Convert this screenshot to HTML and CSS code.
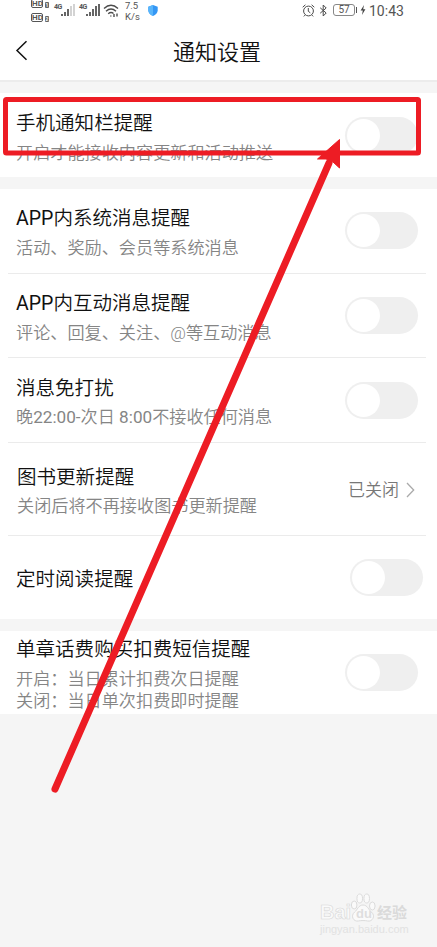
FILE: index.html
```html
<!DOCTYPE html>
<html lang="zh-CN">
<head>
<meta charset="utf-8">
<title>通知设置</title>
<link rel="stylesheet" href="styles.css">
</head>
<body>
<div class="screen">
  <header class="header">
    <div class="status">
      <div class="status-left">
        <div class="sims">
          <span class="sim"><b>HD</b><i>1</i></span>
          <span class="sim"><b>HD</b><i>2</i></span>
        </div>
        <div class="cell"><span>4G</span><svg width="14" height="14" viewBox="0 0 14 14"><path d="M1 11v2M4 9v4M7 6v7" /><path class="dim" d="M10 3v10M13 1v12"/></svg></div>
        <div class="cell"><span>4G</span><svg width="14" height="14" viewBox="0 0 14 14"><path d="M1 11v2M4 9v4M7 6v7M10 3v10M13 1v12"/></svg></div>
        <svg class="wifi" width="16" height="14" viewBox="0 0 16 14"><path d="M1 4.5Q8-2 15 4.5M3 7.3Q8 2.8 13 7.3M5.2 9.7Q8 7.4 10.5 9.5M7.8 11.5v1M11 10v3M14 9.5v3"/></svg>
        <div class="speed">7.5<br>K/s</div>
        <svg class="shield" width="10" height="11" viewBox="0 0 10 11"><path fill="#3497f4" d="M5 0l4.7 1.7v4Q9.300 9 5 11 .7 9 .3 5.700v-4z"/><path fill="#58b5fb" d="M5 0v11Q.7 9 .3 5.700v-4z"/></svg>
      </div>
      <div class="status-right">
        <svg width="13" height="13" viewBox="0 0 13 13"><circle cx="6.500" cy="7" r="4.900"/><path d="M6.300 4v3.300l2 1.500M.7 3.200L3.400.8M12.300 3.200L9.600.8M2.800 11.200l-1 1.200M10.200 11.200l1 1.200"/></svg>
        <svg class="bt" width="9" height="13" viewBox="0 0 9 13"><path d="M1.200 3.800l6 5.200-3 3V1l3 3-6 5.200"/></svg>
        <span class="battery">57</span><span class="nub"></span>
        <svg class="bolt" width="6" height="10" viewBox="0 0 6 10"><path d="M4 0L.6 5.400h2.200L2 10l3.400-5.700H3.200z"/></svg>
        <span class="clock">10:43</span>
      </div>
    </div>
    <div class="nav">
      <svg class="back" width="13" height="21" viewBox="0 0 13 21"><path d="M11.500 1.200L2 10.500l9.500 9.300"/></svg>
      <h1>通知设置</h1>
    </div>
  </header>

  <section class="group">
    <div class="row row-a">
      <div class="text"><h2>手机通知栏提醒</h2><p>开启才能接收内容更新和活动推送</p></div>
      <span class="toggle"></span>
    </div>
  </section>

  <section class="group">
    <div class="row row-b line">
      <div class="text"><h2><span class="latin">APP</span>内系统消息提醒</h2><p>活动、奖励、会员等系统消息</p></div>
      <span class="toggle"></span>
    </div>
    <div class="row row-c line">
      <div class="text"><h2><span class="latin">APP</span>内互动消息提醒</h2><p>评论、回复、关注、@等互动消息</p></div>
      <span class="toggle"></span>
    </div>
    <div class="row row-d line">
      <div class="text"><h2>消息免打扰</h2><p>晚<span class="latin">22:00-</span>次日<span class="latin"> 8:00</span>不接收任何消息</p></div>
      <span class="toggle"></span>
    </div>
    <div class="row row-e line">
      <div class="text"><h2>图书更新提醒</h2><p>关闭后将不再接收图书更新提醒</p></div>
      <div class="state">已关闭<svg width="9" height="16" viewBox="0 0 9 16"><path d="M1 1l6.700 7L1 15"/></svg></div>
    </div>
    <div class="row row-f">
      <div class="text"><h2>定时阅读提醒</h2></div>
      <span class="toggle"></span>
    </div>
  </section>

  <section class="group">
    <div class="row row-g">
      <div class="text"><h2>单章话费购买扣费短信提醒</h2><p>开启：当日累计扣费次日提醒<br>关闭：当日单次扣费即时提醒</p></div>
      <span class="toggle"></span>
    </div>
  </section>

  <svg class="marks" width="437" height="947" viewBox="0 0 437 947">
    <rect x="5.500" y="99.500" width="413" height="53.500" rx="1"/>
    <path class="shaft" d="M55 789L329 163"/>
    <path class="head" d="M339.500 139.500v28.500l-6.500-6-7-3-8.500 0z"/>
  </svg>

  <div class="watermark">
    <div class="brand">
      <span class="bai">Bai</span>
      <span class="paw"><svg width="26" height="30" viewBox="0 0 28 30" preserveAspectRatio="none"><ellipse cx="4.500" cy="12" rx="3" ry="4"/><ellipse cx="10.500" cy="5.500" rx="3" ry="4.500"/><ellipse cx="18" cy="5.500" rx="3" ry="4.500"/><ellipse cx="24" cy="13" rx="3" ry="4"/><path d="M14 12c5 0 6 5 9 7 5 4 1 10-4 9-3-.6-7-.6-10 0-5 1-9-5-4-9 3-2 4-7 9-7z"/></svg><em>du</em></span>
      <span class="jy">经验</span>
    </div>
    <div class="site">jingyan.baidu.com</div>
  </div>
</div>
</body>
</html>
```

FILE: styles.css
```css
* { box-sizing: border-box; }
body { margin: 0; background: #f5f5f5; }
h1, h2, p { margin: 0; font-weight: 350; white-space: nowrap; }
svg { display: block; flex: none; fill: none; }

.screen {
  position: relative;
  width: 437px;
  height: 947px;
  overflow: hidden;
  background: #f5f5f5;
  font-family: Roboto, "Noto Sans CJK SC", sans-serif;
  color: #111;
}

.header { height: 82px; background: #fff; border-bottom: 2px solid #ececec; }
.status { display: flex; justify-content: space-between; height: 24px; padding: 0 34px 0 31px; color: #555; }
.status svg { stroke: #4b4b4b; }
.status-left, .status-right { display: flex; align-items: flex-start; }
.sims { display: flex; flex-direction: column; gap: 5px; width: 19px; margin-top: -1px; }
.sim { display: flex; align-items: flex-end; gap: 2px; height: 9px; }
.sim b { width: 12px; height: 9px; border: 1px solid #555; border-radius: 2px; font-size: 8px; line-height: 7px; text-align: center; }
.sim i { width: 4px; height: 6px; background: #666; color: #fff; border-radius: 1px; font: 700 5px/6px Roboto, sans-serif; text-align: center; }
.cell { display: flex; width: 25px; padding-left: 4px; }
.cell span { width: 7px; margin-top: 3px; font-size: 7px; line-height: 8px; font-weight: 700; letter-spacing: -.6px; }
.cell svg { margin-top: 3px; stroke-width: 1.7; }
.cell .dim { stroke: #ccc; }
.wifi { margin: 4px 0 0 3px; stroke-width: 1.4; }
.speed { margin-left: 6px; width: 16px; font-size: 9.5px; line-height: 11px; }
.status .shield { margin: 5px 0 0 7px; stroke: none; }
.status-right { padding-top: 4px; }
.bt { margin-left: 4px; }
.battery { width: 22px; height: 12px; margin: 0 0 0 5px; border: 1px solid #888; border-radius: 3px; font-size: 10px; line-height: 10px; text-align: center; }
.nub { width: 1px; height: 6px; margin: 3px 0 0 1px; background: #555; }
.status .bolt { margin: 1px 0 0 3px; fill: #444; stroke: none; }
.clock { margin: 0 0 0 3px; width: 34px; font-size: 14px; line-height: 15px; white-space: nowrap; }

.nav { display: grid; grid-template-columns: 158px 1fr; padding: 12px 0 0 15px; }
.back { margin-top: 4px; stroke: #111; stroke-width: 1.5; }
.nav h1 { margin-top: 2px; font-size: 22px; line-height: 30px; }

.group { margin-top: 12px; background: #fff; }
.header + .group { margin-top: 11px; }
.row { display: flex; justify-content: space-between; align-items: flex-start; height: 84px; padding: 0 19px 0 16px; }
.line { background: linear-gradient(#ebebeb, #ebebeb) 8px 100% / 418px 1px no-repeat; }
.row h2 { font-size: 19.550px; line-height: 28px; }
.row p { margin-top: 4px; font-size: 17.150px; line-height: 22px; color: #858585; }
.latin { font-weight: 400; white-space: pre; }
.toggle { width: 73px; height: 37px; margin-top: 23px; padding: 2px; border-radius: 19px; background: #efefef; }
.toggle::before { content: ""; display: block; width: 33px; height: 33px; border-radius: 50%; background: #fff; }

.row-a .text { padding-top: 17px; }
.row-a .toggle { margin-top: 24px; }
.row-b { height: 85px; }
.row-b .text, .row-c .text { padding-top: 16px; }
.row-d { height: 85px; }
.row-d .text { padding-top: 16.5px; }
.row-d .toggle { margin-top: 24px; }
.row-d p { margin-top: 3.5px; }
.row-e { height: 93px; padding-left: 17px; padding-right: 22px; }
.row-e .text { padding-top: 21px; }
.row-e p { margin-top: 3px; }
.state { display: flex; align-items: center; gap: 7px; margin-top: 35px; font-size: 17px; line-height: 24px; color: #777; font-weight: 350; }
.state svg { stroke: #aaa; stroke-width: 1.3; }
.row-f { height: 83px; padding-right: 14px; }
.row-f .text { padding-top: 30px; }
.row-g { height: 83px; }
.row-g .text { padding-top: 5px; }
.row-g p { margin-top: 3.5px; line-height: 22.500px; }

.marks { position: absolute; left: 0; top: 0; }
.marks rect { stroke: #ed1c24; stroke-width: 5; }
.marks .shaft { stroke: #ed1c24; stroke-width: 7; stroke-linecap: round; }
.marks .head { fill: #ed1c24; stroke: #ed1c24; }

.watermark { position: absolute; left: 320px; top: 892px; width: 92px; color: #fafafa; -webkit-text-stroke: .6px #d8d8d8; }
.brand { display: flex; align-items: flex-end; height: 31px; }
.bai { width: 30px; font: 700 20px/21px "Liberation Sans", sans-serif; }
.paw { position: relative; width: 27px; height: 30px; }
.paw svg { stroke: #dadada; fill: #fafafa; }
.paw em { position: absolute; left: 6px; top: 14px; font: 700 13px/14px "Liberation Sans", sans-serif; color: #dedede; -webkit-text-stroke: 0; }
.jy { font-size: 15px; line-height: 19px; font-weight: 700; white-space: nowrap; color: #dadada; -webkit-text-stroke: 0; }
.site { font: 11px/13px "Liberation Sans", sans-serif; -webkit-text-stroke: 0; color: #e2e2e2; }
```
